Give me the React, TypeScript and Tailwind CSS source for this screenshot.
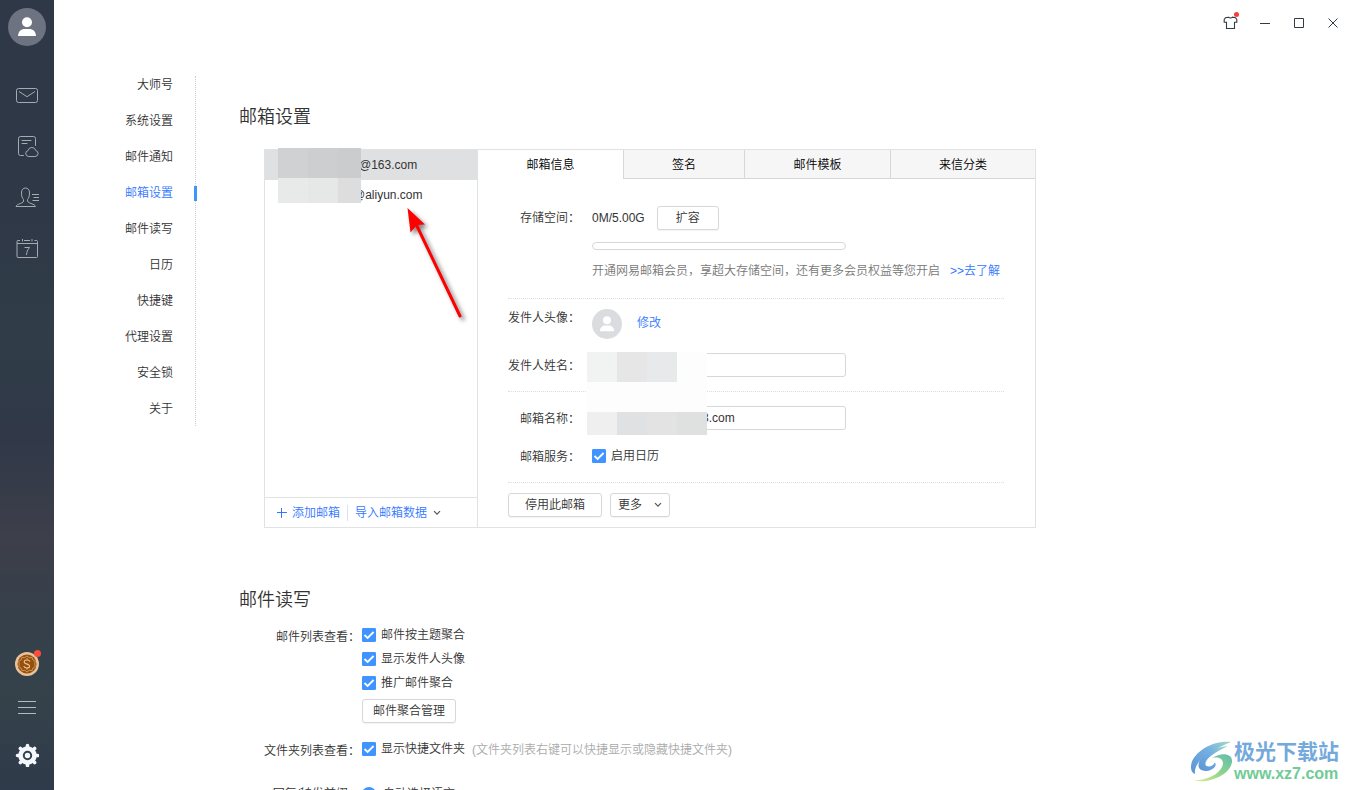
import React, { useState } from 'react';

const NAV_ITEMS = ['大师号', '系统设置', '邮件通知', '邮箱设置', '邮件读写', '日历', '快捷键', '代理设置', '安全锁', '关于'];

function Person({ className }: { className: string }) {
  return (
    <svg viewBox="0 0 20 20" className={className} fill="currentColor" aria-hidden="true">
      <circle cx="10" cy="5.200" r="5" />
      <path d="M1 19c.3-4.600 2.800-7 7-7h4c4.200 0 6.700 2.400 7 7z" />
    </svg>
  );
}

function Chevron() {
  return (
    <svg width="8" height="6" viewBox="0 0 8 6" fill="none" stroke="#555" strokeWidth="1.2" aria-hidden="true">
      <path d="M1 1.200l3 3 3-3" />
    </svg>
  );
}

function SideButton({ label, className, children }: { label: string; className: string; children: React.ReactNode }) {
  return (
    <button type="button" aria-label={label} className={`flex w-full shrink-0 items-center justify-center ${className}`}>
      {children}
    </button>
  );
}

function Sidebar() {
  return (
    <aside className="flex w-[54px] shrink-0 flex-col items-center bg-[linear-gradient(180deg,#2f3847_0%,#2f3847_28%,#303d48_42%,#303848_55%,#3d3f4a_68%,#35404b_79%,#35424a_88%,#2f3a4a_100%)] pt-2 pb-[11px] text-[#a4abb3]">
      <button type="button" aria-label="账号" className="mb-6 flex size-[38px] shrink-0 items-center justify-center rounded-full bg-[#6d7380] text-white">
        <Person className="size-5" />
      </button>
      <SideButton label="邮件" className="h-[51px]">
        <svg width="24" height="18" viewBox="0 0 24 18" fill="none" stroke="currentColor">
          <rect x="1.500" y="1.500" width="21" height="14" rx="2" />
          <path d="M4 4.500l8 5.200 8-5.200" />
        </svg>
      </SideButton>
      <SideButton label="便签" className="h-[51px]">
        <svg width="24" height="24" viewBox="0 0 24 24" fill="none" stroke="currentColor" strokeLinecap="round">
          <path d="M8.500 20.500h-3a2 2 0 0 1-2-2v-15a2 2 0 0 1 2-2h13a2 2 0 0 1 2 2v7M7 5.500h9M7 8.500h5" />
          <path d="M13.500 21.500a3 3 0 0 1-.5-5.900 4 4 0 0 1 7.800 0 3 3 0 0 1-.5 5.900z" />
        </svg>
      </SideButton>
      <SideButton label="联系人" className="h-[51px]">
        <svg width="24" height="22" viewBox="0 0 24 22" fill="none" stroke="currentColor">
          <path d="M8.500 12.500C7 11 6.500 8.500 6.500 6c0-3.400 1.600-5 4-5s4 1.600 4 5c0 2.500-.5 5-2 6.500-.3 2.500 1 3 3.500 4 3 1 4.200 1.800 4.500 3H1c.3-1.200 1.500-2 4.500-3 2.500-1 3.300-1.500 3-4z" />
          <path d="M17 7.500h7M18.500 10.500H24M17.500 13.500H24" />
        </svg>
      </SideButton>
      <SideButton label="日历" className="h-[51px]">
        <svg width="22" height="22" viewBox="0 0 22 22" fill="none" stroke="currentColor">
          <path d="M4 2.500H2a1 1 0 0 0-1 1v15a1 1 0 0 0 1 1h18.500a1 1 0 0 0 1-1v-15a1 1 0 0 0-1-1h-2M8 2.500h6M6.500 1v2.500M16 1v2.500M1 5.500h20" />
          <path d="M8.500 9.500h5c-2 2.500-2.800 4.500-3 7.500" />
        </svg>
      </SideButton>
      <div className="grow" />
      <SideButton label="积分" className="h-[38px]">
        <svg width="28" height="30" viewBox="0 0 28 30" fill="none">
          <circle cx="14" cy="15" r="12" fill="#e8c39a" />
          <circle cx="14" cy="15" r="9.500" fill="#94500f" />
          <path d="M14 7l2.200 1.700 2.800-.3 1 2.600 2.400 1.500-.8 2.500.8 2.500-2.400 1.500-1 2.600-2.800-.3L14 23l-2.200-1.700-2.800.3-1-2.600-2.400-1.500.8-2.500-.8-2.500L8 11l1-2.600 2.800.3z" stroke="#dca468" strokeWidth=".8" />
          <path d="M17 12.500c-.5-1.200-1.600-1.500-3-1.500-3.500 0-3.800 3-.5 3.900 4 1 4 4.100.5 4.100-1.600 0-2.800-.5-3.200-1.800M14 9.500V11M14 19v1.500" stroke="#f0c592" strokeWidth="1.100" />
          <circle cx="24.500" cy="4.500" r="3.500" fill="#ff4b38" />
        </svg>
      </SideButton>
      <SideButton label="菜单" className="h-12">
        <svg width="18" height="14" viewBox="0 0 18 14" stroke="#b4babf">
          <path d="M0 1.500h18M0 7.500h18M0 13.500h18" />
        </svg>
      </SideButton>
      <SideButton label="设置" className="h-12">
        <svg width="24" height="24" viewBox="0 0 24 24" fill="none">
          <circle cx="12.500" cy="12.500" r="9.300" fill="#f4f7fc" />
          <path d="M12.500 2.500v20M2.500 12.500h20M5.400 5.400l14.200 14.200M19.600 5.400L5.400 19.600" stroke="#f4f7fc" strokeWidth="3.600" strokeLinecap="round" />
          <circle cx="12.500" cy="12.500" r="3.700" fill="#f4f7fc" stroke="#34404a" strokeWidth="2" />
        </svg>
      </SideButton>
    </aside>
  );
}

function WindowBar() {
  const button = 'flex h-[46px] w-[34px] items-center justify-center';
  return (
    <header className="flex shrink-0 justify-end">
      <button type="button" aria-label="皮肤" className={button}>
        <svg width="18" height="24" viewBox="0 0 18 24" fill="none">
          <path d="M6.500 6.200l-3 .5-1.300 1.800v2.800h2.300v6.200h8v-6.200h2.300V8.500l-1.300-1.800-3-.5c-.9 1-3.100 1-4 0z" stroke="#333c42" strokeWidth="1.100" />
          <circle cx="14.500" cy="3.500" r="2.500" fill="#fc3a3a" />
        </svg>
      </button>
      <button type="button" aria-label="最小化" className={button}>
        <svg width="10" height="11" viewBox="0 0 10 11" stroke="#333c42"><path d="M0 5.500h10" /></svg>
      </button>
      <button type="button" aria-label="最大化" className={button}>
        <svg width="10" height="10" viewBox="0 0 10 10" fill="none" stroke="#333c42"><path d="M.5.500h9v9h-9z" /></svg>
      </button>
      <button type="button" aria-label="关闭" className={button}>
        <svg width="10" height="10" viewBox="0 0 10 10" stroke="#333c42"><path d="M.5.500l9 9M9.500.500l-9 9" /></svg>
      </button>
    </header>
  );
}

function SettingsNav() {
  return (
    <nav className="mt-[30px] w-[142px] shrink-0 self-start border-r border-dotted border-[#ccc] pr-[22px] pb-2">
      <ul className="flex flex-col gap-[18px]">
        {NAV_ITEMS.map((item) => {
          const active = item === '邮箱设置';
          return (
            <li key={item} className="relative h-[18px] text-right leading-[18px]">
              <a href="#" className={active ? 'text-[#3377ff]' : ''}>{item}</a>
              {active && <span className="absolute top-[2px] -right-6 h-[15px] w-[3px] bg-[#3f94ff]" />}
            </li>
          );
        })}
      </ul>
    </nav>
  );
}

function CheckBox({ label }: { label: string }) {
  return (
    <label className="flex h-6 items-center gap-[5px]">
      <span className="grid size-[14px]">
        <input type="checkbox" defaultChecked className="peer col-start-1 row-start-1 size-[14px] appearance-none rounded-[1px] border border-[#bbb] checked:border-[#3f94ff] checked:bg-[#3f94ff]" />
        <svg viewBox="0 0 14 14" className="pointer-events-none invisible col-start-1 row-start-1 size-[14px] peer-checked:visible" fill="none" stroke="#fff" strokeWidth="1.800">
          <path d="M2.500 7l3.100 3 6-6" />
        </svg>
      </span>
      {label}
    </label>
  );
}

const BUTTON = 'h-6 rounded-[3px] border border-[#d6d7d9] bg-white shadow-[0_1px_1px_#0000000d]';
const INPUT = 'h-6 w-[254px] rounded-[3px] border border-[#d6d7d9] bg-white';
const LABEL = 'w-[72px] shrink-0 text-right whitespace-nowrap';

function MailboxList() {
  return (
    <div className="flex w-[213px] shrink-0 flex-col border-r border-[#e1e2e4]">
      <ul className="relative grow leading-[30px]">
        <li className="bg-[#dfe0e2] pl-[94px]">@163.com</li>
        <li className="pl-[88px]">@aliyun.com</li>
        <li aria-hidden="true" className="absolute -top-0.5 left-[13px] grid h-[55px] w-[83px] grid-cols-[30px_30px_23px] grid-rows-[30px_25px]">
          <span className="bg-[#d0d1d3]" />
          <span className="bg-[#cdced0]" />
          <span className="bg-[#cbccce]" />
          <span className="bg-[#e8eae9]" />
          <span className="bg-[#e6e8e7]" />
          <span className="bg-[#dddddd]" />
        </li>
      </ul>
      <div className="flex h-[30px] items-center border-t border-[#e1e2e4] pl-3 text-[#3377ff]">
        <button type="button" className="flex items-center gap-[5px]">
          <svg width="10" height="10" viewBox="0 0 10 10" stroke="currentColor" aria-hidden="true"><path d="M0 4.500h10M4.500 0v10" /></svg>
          添加邮箱
        </button>
        <span className="mx-[7px] h-4 w-px bg-[#d9e3f0]" />
        <button type="button" className="flex items-center gap-1.5">
          导入邮箱数据
          <Chevron />
        </button>
      </div>
    </div>
  );
}

function MailboxInfo() {
  const [name, setName] = useState('');
  const [mailbox, setMailbox] = useState('3.com');
  return (
    <div className="min-w-0 grow">
      <div role="tablist" className="flex h-[29px]">
        <button type="button" role="tab" aria-selected="true" className="flex-[145] text-black">邮箱信息</button>
        <button type="button" role="tab" aria-selected="false" className="flex-[120] border-b border-l border-[#d6d7d9] bg-[#f6f6f6] pt-px text-black">签名</button>
        <button type="button" role="tab" aria-selected="false" className="flex-[145] border-b border-l border-[#d6d7d9] bg-[#f6f6f6] pt-px text-black">邮件模板</button>
        <button type="button" role="tab" aria-selected="false" className="flex-[144] border-b border-l border-[#d6d7d9] bg-[#f6f6f6] pt-px text-black">来信分类</button>
      </div>
      <div className="pt-[27px] pr-[31px] pb-2.5 pl-[30px]">
        <div className="flex gap-3">
          <span className={`${LABEL} leading-6`}>存储空间：</span>
          <div>
            <div className="flex items-center gap-3">
              <span>0M/5.00G</span>
              <button type="button" className={`${BUTTON} w-[62px]`}>扩容</button>
            </div>
            <div className="mt-3 h-2 w-[254px] rounded-full border border-[#d6d7d9]" />
            <p className="mt-3 leading-[18px] whitespace-nowrap text-[#777]">
              开通网易邮箱会员，享超大存储空间，还有更多会员权益等您开启
              <a href="#" className="ml-2.5 text-[#3377ff]">&gt;&gt;去了解</a>
            </p>
          </div>
        </div>
        <div className="mt-[18px] flex gap-3 border-t border-dotted border-[#ddd] pt-2.5">
          <span className={`${LABEL} leading-[18px]`}>发件人头像：</span>
          <span className="flex size-[30px] items-center justify-center rounded-full bg-[#dadcdf] text-white">
            <Person className="size-4" />
          </span>
          <a href="#" className="ml-[3px] leading-7 text-[#3377ff]">修改</a>
        </div>
        <div className="relative mt-3.5">
          <div className="flex items-center gap-3">
            <label htmlFor="sender" className={`${LABEL} pt-0.5`}>发件人姓名：</label>
            <input id="sender" value={name} onChange={(e) => setName(e.target.value)} className={`${INPUT} px-2`} />
          </div>
          <div className="mt-3.5 flex items-center gap-3 border-t border-dotted border-[#ddd] pt-3.5">
            <label htmlFor="mailbox" className={`${LABEL} pt-0.5`}>邮箱名称：</label>
            <input id="mailbox" value={mailbox} onChange={(e) => setMailbox(e.target.value)} className={`${INPUT} pl-[109px]`} />
          </div>
          <div aria-hidden="true" className="pointer-events-none absolute -top-px left-[79px] grid w-[120px] grid-cols-4 grid-rows-[30px_30px_23px]">
            <span className="bg-[#f1f3f2]" />
            <span className="bg-[#e6e6e6]" />
            <span className="bg-[#e8e9eb]" />
            <span className="bg-[#fdfdfd]" />
            <span className="col-span-4 bg-[#fdfdfd]" />
            <span className="bg-[#efefef]" />
            <span className="bg-[#e0e1e3]" />
            <span className="bg-[#e3e3e3]" />
            <span className="bg-[#dfe1e0]" />
          </div>
        </div>
        <div className="mt-3.5 flex items-center gap-3">
          <span className={`${LABEL} pt-0.5`}>邮箱服务：</span>
          <CheckBox label="启用日历" />
        </div>
        <div className="mt-3.5 flex gap-2 border-t border-dotted border-[#ddd] pt-2.5">
          <button type="button" className={`${BUTTON} w-[94px]`}>停用此邮箱</button>
          <button type="button" className={`${BUTTON} flex w-[60px] items-center justify-between px-[7px]`}>
            更多
            <Chevron />
          </button>
        </div>
      </div>
    </div>
  );
}

function ReadWriteSettings() {
  const label = 'w-24 shrink-0 text-right leading-7 whitespace-nowrap';
  return (
    <div className="ml-[25px]">
      <div className="mt-[9px] flex gap-0.5">
        <span className={label}>邮件列表查看：</span>
        <div>
          <CheckBox label="邮件按主题聚合" />
          <CheckBox label="显示发件人头像" />
          <CheckBox label="推广邮件聚合" />
          <button type="button" className={`${BUTTON} mt-1 block w-[94px]`}>邮件聚合管理</button>
        </div>
      </div>
      <div className="mt-3.5 flex gap-0.5">
        <span className={label}>文件夹列表查看：</span>
        <div className="flex items-start gap-[7px]">
          <CheckBox label="显示快捷文件夹" />
          <span className="leading-[26px] text-[#aaa]">(文件夹列表右键可以快捷显示或隐藏快捷文件夹)</span>
        </div>
      </div>
      <div className="mt-[15px] flex gap-0.5">
        <span className={label}>回复/转发前缀：</span>
        <label className="flex h-7 items-center gap-[7px]">
          <input type="radio" name="prefix" defaultChecked className="size-[14px] appearance-none rounded-full border-4 border-[#3f94ff] bg-white" />
          自动选择语言
        </label>
      </div>
    </div>
  );
}

function Pointer() {
  return (
    <svg aria-hidden="true" width="80" height="130" viewBox="0 0 80 130" className="pointer-events-none absolute top-[200px] left-[400px] drop-shadow-[3px_3px_2px_#00000080]">
      <path d="M16 24L60 116" stroke="#f00" strokeWidth="3" strokeLinecap="round" />
      <path d="M7.500 8L25 24.500l-8 .5-6.500 7.500z" fill="#f00" />
    </svg>
  );
}

function Watermark() {
  return (
    <div className="pointer-events-none absolute right-[11px] bottom-[6px] flex items-center gap-px">
      <svg width="43" height="42" viewBox="0 0 43 42" aria-hidden="true">
        <defs>
          <linearGradient id="swirl-blue" x1="0" y1="1" x2="1" y2="0">
            <stop offset="0" stopColor="#5b93d4" />
            <stop offset=".6" stopColor="#74b1e2" />
            <stop offset="1" stopColor="#a4dcc4" />
          </linearGradient>
          <linearGradient id="swirl-green" x1="0" y1="1" x2="1" y2="0">
            <stop offset="0" stopColor="#e2ee90" />
            <stop offset=".5" stopColor="#8ed48c" />
            <stop offset="1" stopColor="#5fbcae" />
          </linearGradient>
        </defs>
        <path d="M41 1C22-1 2 12 1 25c-.3 4 1 7 4 8-1-8 5-15 13-20C26 8 33 4 41 1z" fill="url(#swirl-blue)" />
        <path d="M38 5C24 6 9 15 8.500 24c-.3 6 7 7.500 13 4.500 4-2 5.500-5 3-7-1 4-8 5.500-9 2C14.500 18 25 11 38 5z" fill="url(#swirl-blue)" />
        <path d="M22 17c9-2 13 3 10 9-4 8-15 13-28 13.500C19 43 40 34 42 21c1-9-11-10-20-4z" fill="url(#swirl-green)" />
      </svg>
      <div className="font-bold whitespace-nowrap">
        <div className="text-[21px] leading-6 text-[#74a9dc]">极光下载站</div>
        <div className="text-base leading-5 text-[#70cb96]">www.xz7.com</div>
      </div>
    </div>
  );
}

export default function App() {
  return (
    <div className="relative flex h-screen overflow-hidden bg-white font-['Liberation_Sans','Noto_Sans_CJK_SC',sans-serif] text-xs font-[350] text-[#333]">
      <Sidebar />
      <div className="flex min-w-0 grow flex-col">
        <WindowBar />
        <div className="flex min-h-0 grow overflow-hidden">
          <SettingsNav />
          <main className="min-w-0 grow pt-[57px] pl-[43px]">
            <h1 className="text-lg leading-7">邮箱设置</h1>
            <section className="mt-[18px] ml-[25px] flex max-w-[772px] border border-[#e1e2e4]">
              <MailboxList />
              <MailboxInfo />
            </section>
            <h1 className="mt-[58px] text-lg leading-7">邮件读写</h1>
            <ReadWriteSettings />
          </main>
        </div>
      </div>
      <Pointer />
      <Watermark />
    </div>
  );
}
